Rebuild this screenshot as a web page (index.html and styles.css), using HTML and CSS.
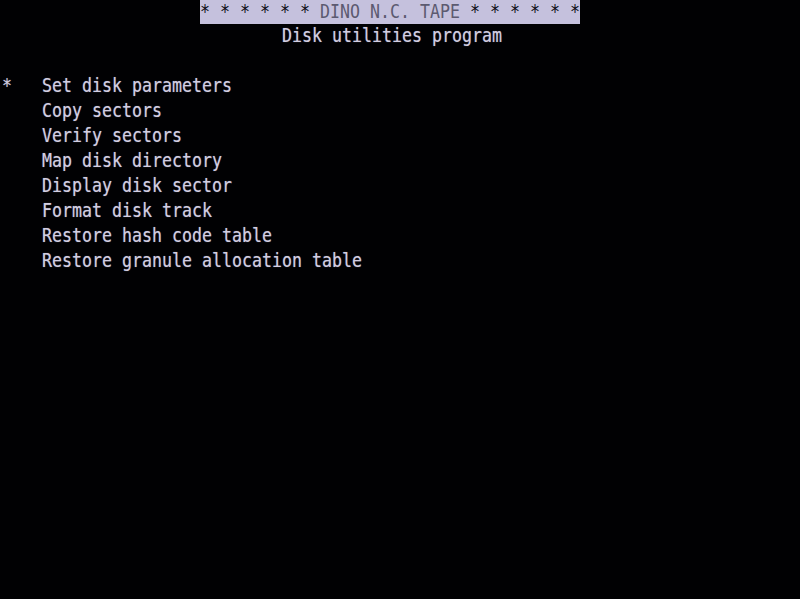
FILE: index.html
```html
<!DOCTYPE html>
<html>
<head>
<meta charset="utf-8">
<link rel="stylesheet" href="styles.css">
</head>
<body>
<div class="screen">
  <div class="row"><span class="banner"><span class="t">* * * * * * <span class="title">DINO N.C. TAPE</span> * * * * * *</span></span></div>
  <div class="row"><span class="subtitle t">Disk utilities program</span></div>
  <div class="row"></div>
  <div class="row"><span class="cursor t">*</span><span class="item t">Set disk parameters</span></div>
  <div class="row"><span class="cursor t"></span><span class="item t">Copy sectors</span></div>
  <div class="row"><span class="cursor t"></span><span class="item t">Verify sectors</span></div>
  <div class="row"><span class="cursor t"></span><span class="item t">Map disk directory</span></div>
  <div class="row"><span class="cursor t"></span><span class="item t">Display disk sector</span></div>
  <div class="row"><span class="cursor t"></span><span class="item t">Format disk track</span></div>
  <div class="row"><span class="cursor t"></span><span class="item t">Restore hash code table</span></div>
  <div class="row"><span class="cursor t"></span><span class="item t">Restore granule allocation table</span></div>
</div>
</body>
</html>
```
FILE: styles.css
```css
html, body {
  margin: 0;
  padding: 0;
  background: #000;
}
.screen {
  width: 800px;
  height: 599px;
  background: #010103;
  color: #d2cee2;
  font-family: "DejaVu Sans Mono", "Liberation Mono", monospace;
  font-size: 16.61px;
  overflow: hidden;
  text-shadow: 0 0 1px rgba(210, 206, 226, 0.5);
}
.row {
  display: flex;
  height: 25px;
  line-height: 25px;
  white-space: pre;
}
.t {
  display: inline-block;
  transform: translate(2px, -2px) scaleY(1.16);
  transform-origin: 50% 40%;
}
.banner {
  display: inline-block;
  margin-left: 200px;
  width: 380px;
  height: 24px;
  overflow: hidden;
  background: #c5c1dd;
  color: #0c0b14;
  text-shadow: none;
}
.banner .t {
  transform: translate(0, -1px) scaleY(1.16);
}
.title {
  color: #5c5a70;
}
.subtitle {
  margin-left: 280px;
}
.cursor {
  width: 40px;
}
```
